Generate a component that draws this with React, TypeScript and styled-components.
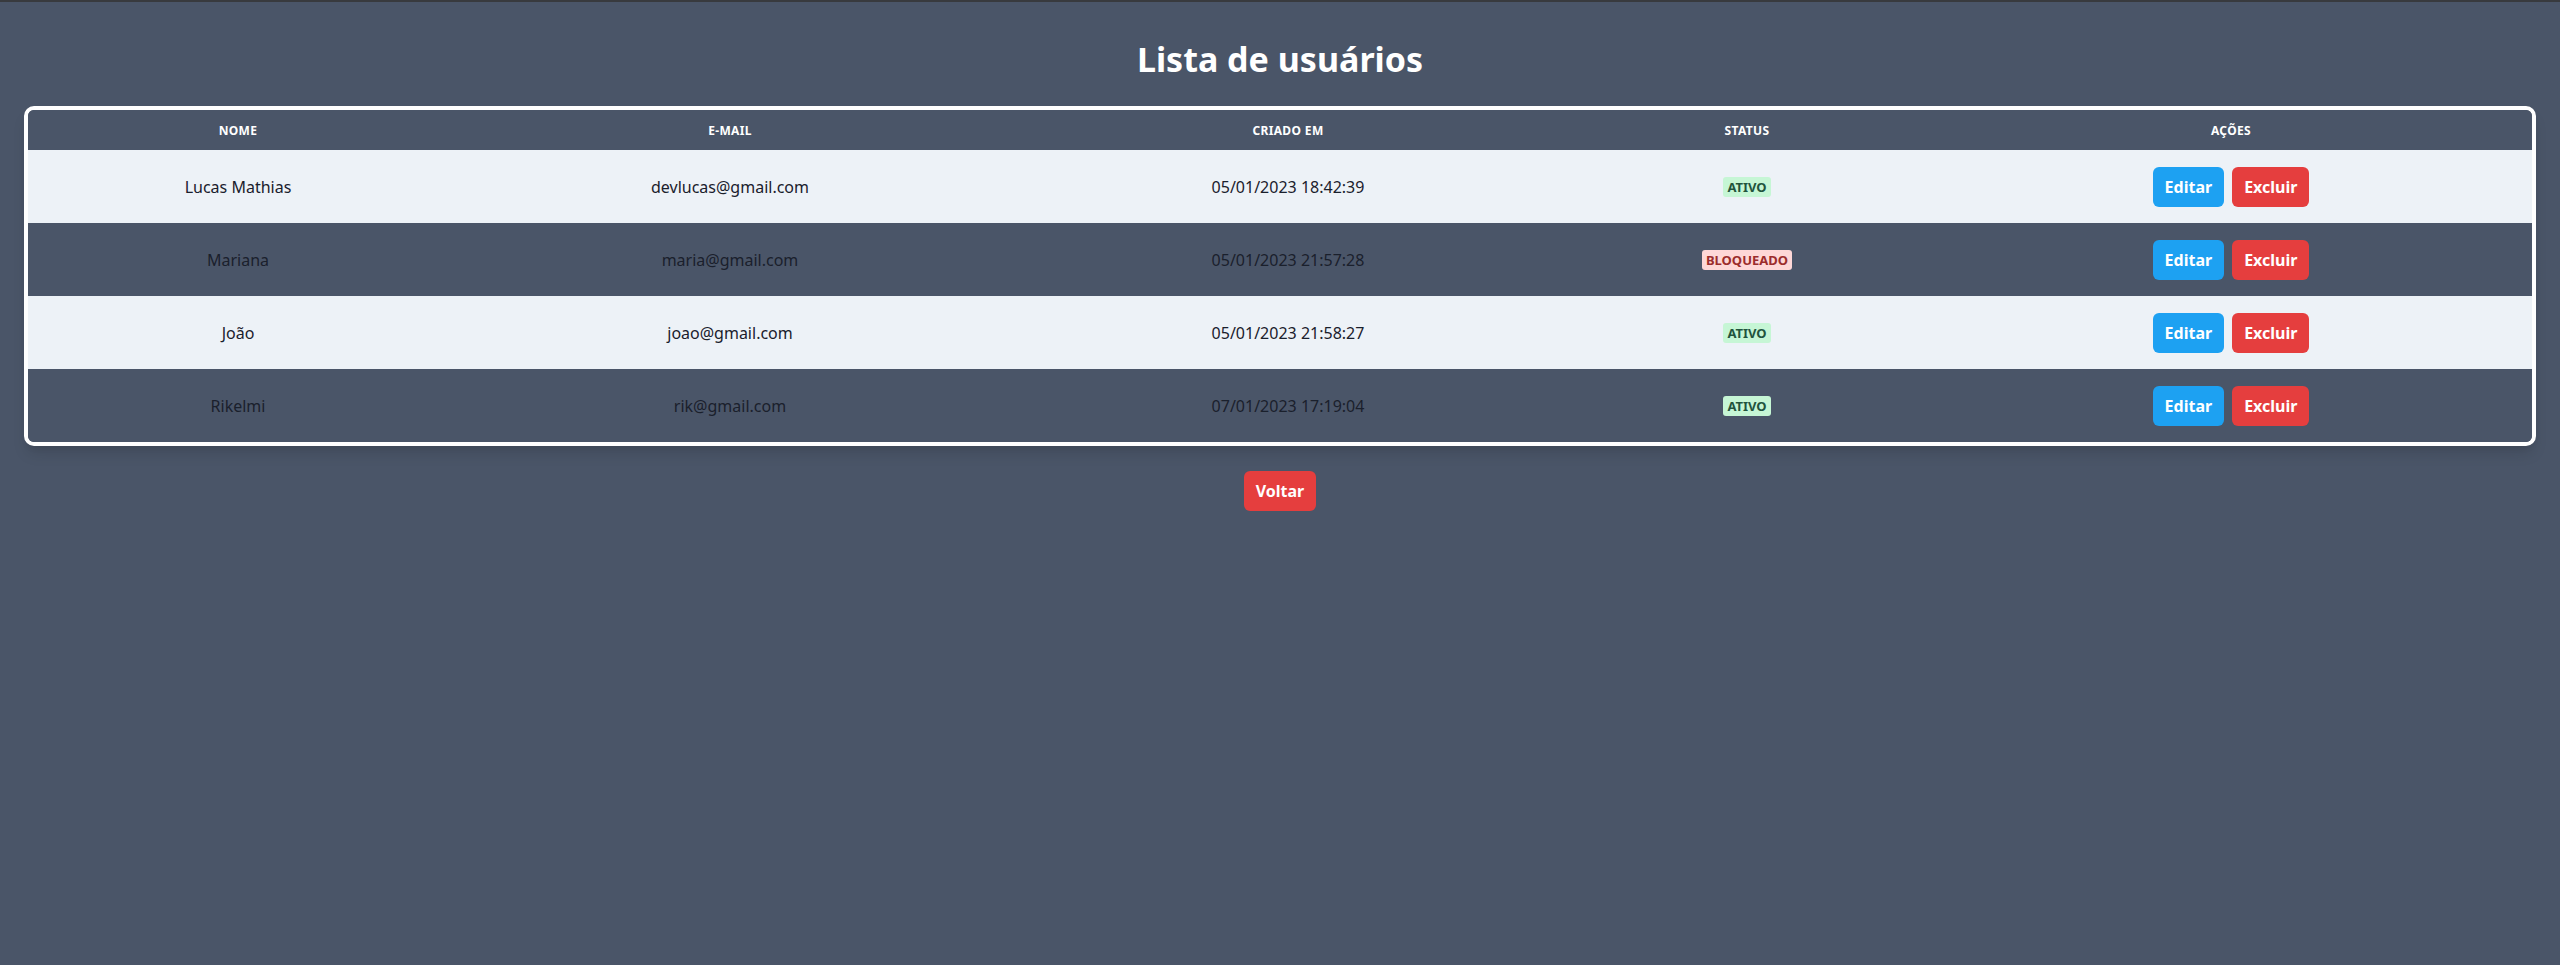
import React from "react";
import styled, { createGlobalStyle } from "styled-components";

const GlobalStyle = createGlobalStyle`
  html, body {
    margin: 0;
    padding: 0;
    background: #4a5568;
  }
  body {
    font-family: "Noto Sans", "Open Sans", "Liberation Sans", sans-serif;
  }
  * { box-sizing: border-box; }
`;

const Page = styled.div`
  min-height: 965px;
  background: #4a5568;
  border-top: 2px solid #383a3e;
  display: flex;
  flex-direction: column;
`;

const Title = styled.h1`
  margin: 0;
  padding: 32px 0 22px;
  text-align: center;
  color: #ffffff;
  font-size: 34px;
  line-height: 50px;
  font-weight: 700;
`;

const TableWrap = styled.div`
  margin: 0 24px;
  border: 4px solid #ffffff;
  border-radius: 10px;
  overflow: hidden;
  box-shadow: 0 10px 15px -3px rgba(0, 0, 0, 0.12), 0 4px 6px -2px rgba(0, 0, 0, 0.06);
`;

const cols = "420px 564px 552px 366px 1fr";

const HeadRow = styled.div`
  display: grid;
  grid-template-columns: ${cols};
  height: 40px;
  align-items: center;
  background: #4a5568;
`;

const HeadCell = styled.div`
  text-align: center;
  color: #ffffff;
  font-size: 12px;
  font-weight: 700;
  text-transform: uppercase;
  letter-spacing: 0.03em;
`;

const Row = styled.div<{ $light: boolean }>`
  display: grid;
  grid-template-columns: ${cols};
  height: 73px;
  align-items: center;
  background: ${(p) => (p.$light ? "#edf2f7" : "#4a5568")};
`;

const Cell = styled.div`
  display: flex;
  justify-content: center;
  align-items: center;
  gap: 8px;
  color: #1a202c;
  font-size: 16px;
`;

const Badge = styled.span<{ $ok: boolean }>`
  display: inline-block;
  padding: 0 4px;
  height: 20px;
  line-height: 20px;
  border-radius: 3px;
  font-size: 13px;
  font-weight: 700;
  background: ${(p) => (p.$ok ? "#c6f6d5" : "#fed7d7")};
  color: ${(p) => (p.$ok ? "#22543d" : "#9b2c2c")};
`;

const Button = styled.button<{ $variant: "blue" | "red" }>`
  height: 40px;
  padding: 0 12px;
  border: none;
  border-radius: 6px;
  font-family: inherit;
  font-size: 16px;
  font-weight: 700;
  color: #ffffff;
  cursor: pointer;
  background: ${(p) => (p.$variant === "blue" ? "#1da1f2" : "#e53e3e")};
`;

const Footer = styled.div`
  display: flex;
  justify-content: center;
  margin-top: 25px;
`;

type User = { name: string; email: string; created: string; active: boolean };

const users: User[] = [
  { name: "Lucas Mathias", email: "devlucas@gmail.com", created: "05/01/2023 18:42:39", active: true },
  { name: "Mariana", email: "maria@gmail.com", created: "05/01/2023 21:57:28", active: false },
  { name: "João", email: "joao@gmail.com", created: "05/01/2023 21:58:27", active: true },
  { name: "Rikelmi", email: "rik@gmail.com", created: "07/01/2023 17:19:04", active: true },
];

export default function App() {
  return (
    <>
      <GlobalStyle />
      <Page>
        <Title>Lista de usuários</Title>
        <TableWrap>
          <HeadRow>
            <HeadCell>Nome</HeadCell>
            <HeadCell>E-mail</HeadCell>
            <HeadCell>Criado em</HeadCell>
            <HeadCell>Status</HeadCell>
            <HeadCell>Ações</HeadCell>
          </HeadRow>
          {users.map((u, i) => (
            <Row key={u.email} $light={i % 2 === 0}>
              <Cell>{u.name}</Cell>
              <Cell>{u.email}</Cell>
              <Cell>{u.created}</Cell>
              <Cell>
                <Badge $ok={u.active}>{u.active ? "ATIVO" : "BLOQUEADO"}</Badge>
              </Cell>
              <Cell>
                <Button $variant="blue">Editar</Button>
                <Button $variant="red">Excluir</Button>
              </Cell>
            </Row>
          ))}
        </TableWrap>
        <Footer>
          <Button $variant="red">Voltar</Button>
        </Footer>
      </Page>
    </>
  );
}
